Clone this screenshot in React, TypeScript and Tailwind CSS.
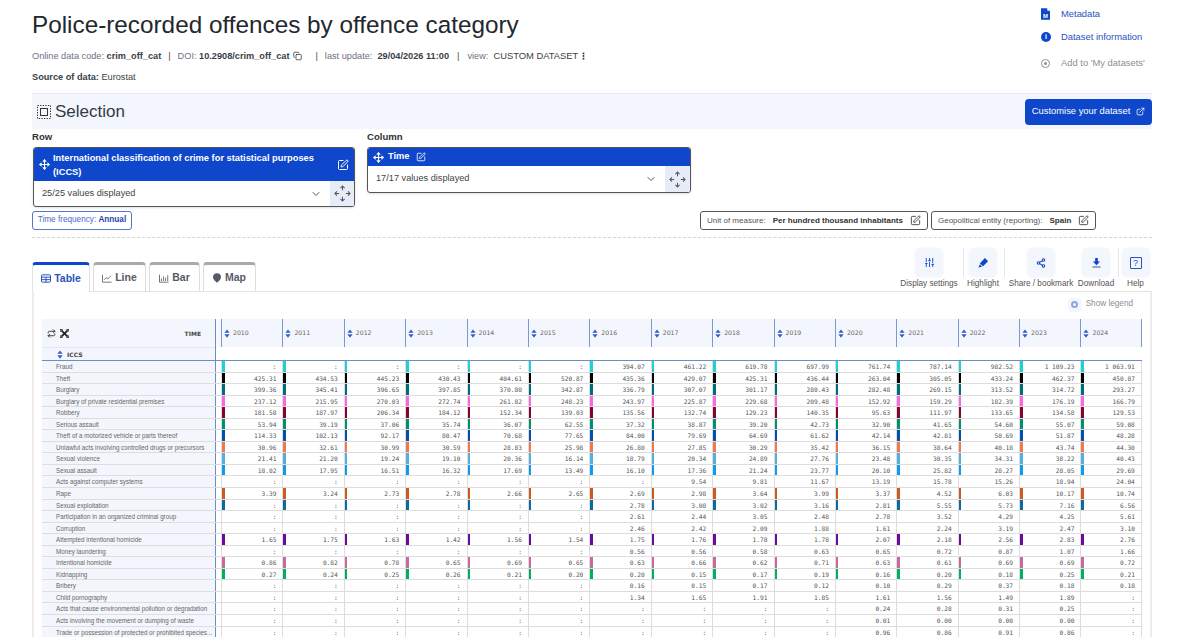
import { ChevronDown, Copy, EllipsisVertical, ExternalLink, Move, Repeat, Share2, SlidersVertical, SquarePen } from "lucide-react";

const years = ["2010", "2011", "2012", "2013", "2014", "2015", "2016", "2017", "2018", "2019", "2020", "2021", "2022", "2023", "2024"];

const rows = [
  { label: "Fraud", color: "bg-[#1fd0d6]", values: ":,:,:,:,:,:,394.07,461.22,619.78,697.99,761.74,787.14,982.52,1 109.23,1 063.91" },
  { label: "Theft", color: "bg-[#000000]", values: "425.31,434.53,445.23,430.43,404.61,520.87,435.36,429.07,425.31,436.44,263.04,305.05,433.24,462.37,450.87" },
  { label: "Burglary", color: "bg-[#006d77]", values: "399.36,345.41,396.65,397.85,370.80,342.87,336.79,307.07,301.17,280.43,282.48,269.15,313.52,314.72,293.27" },
  { label: "Burglary of private residential premises", color: "bg-[#f668e8]", values: "237.12,215.95,270.03,272.74,261.82,248.23,243.97,225.87,229.68,209.48,152.92,159.29,182.39,176.19,166.79" },
  { label: "Robbery", color: "bg-[#8a0030]", values: "181.58,187.97,206.34,184.12,152.34,139.03,135.56,132.74,129.23,140.35,95.63,111.97,133.65,134.58,129.53" },
  { label: "Serious assault", color: "bg-[#00906a]", values: "53.94,39.19,37.06,35.74,36.07,62.55,37.32,38.87,39.20,42.73,32.90,41.65,54.60,55.07,59.08" },
  { label: "Theft of a motorized vehicle or parts thereof", color: "bg-[#0050b0]", values: "114.33,102.13,92.17,80.47,70.68,77.65,84.00,79.69,64.69,61.62,42.14,42.81,50.69,51.87,48.28" },
  { label: "Unlawful acts involving controlled drugs or precursors", color: "bg-[#f07850]", values: "30.96,32.61,30.99,30.59,28.83,25.98,26.80,27.85,30.29,35.42,36.15,38.64,40.18,43.74,44.30" },
  { label: "Sexual violence", color: "bg-[#56aee0]", values: "21.41,21.20,19.24,19.10,20.36,16.14,18.79,20.34,24.89,27.76,23.48,30.35,34.31,38.22,40.43" },
  { label: "Sexual assault", color: "bg-[#0a9cf0]", values: "18.02,17.95,16.51,16.32,17.69,13.49,16.10,17.36,21.24,23.77,20.10,25.82,28.27,28.05,29.69" },
  { label: "Acts against computer systems", color: "", values: ":,:,:,:,:,:,:,9.54,9.81,11.67,13.19,15.78,15.26,18.94,24.04" },
  { label: "Rape", color: "bg-[#d05a1e]", values: "3.39,3.24,2.73,2.78,2.66,2.65,2.69,2.98,3.64,3.99,3.37,4.52,6.03,10.17,10.74" },
  { label: "Sexual exploitation", color: "bg-[#0d6aa0]", values: ":,:,:,:,:,:,2.78,3.08,3.02,3.16,2.81,5.55,5.73,7.16,6.56" },
  { label: "Participation in an organized criminal group", color: "", values: ":,:,:,:,:,:,2.61,2.44,3.05,2.48,2.78,3.52,4.29,4.25,5.61" },
  { label: "Corruption", color: "", values: ":,:,:,:,:,:,2.46,2.42,2.09,1.88,1.61,2.24,3.19,2.47,3.10" },
  { label: "Attempted intentional homicide", color: "bg-[#6a0a9a]", values: "1.65,1.75,1.63,1.42,1.56,1.54,1.75,1.76,1.78,1.78,2.07,2.18,2.56,2.83,2.76" },
  { label: "Money laundering", color: "", values: ":,:,:,:,:,:,0.56,0.56,0.58,0.63,0.65,0.72,0.87,1.07,1.66" },
  { label: "Intentional homicide", color: "bg-[#c76a9a]", values: "0.86,0.82,0.78,0.65,0.69,0.65,0.63,0.66,0.62,0.71,0.63,0.61,0.69,0.69,0.72" },
  { label: "Kidnapping", color: "bg-[#00b060]", values: "0.27,0.24,0.25,0.26,0.21,0.20,0.20,0.15,0.17,0.19,0.16,0.20,0.18,0.25,0.21" },
  { label: "Bribery", color: "", values: ":,:,:,:,:,:,0.16,0.15,0.17,0.12,0.10,0.29,0.37,0.18,0.18" },
  { label: "Child pornography", color: "", values: ":,:,:,:,:,:,1.34,1.65,1.91,1.85,1.61,1.56,1.49,1.89,:" },
  { label: "Acts that cause environmental pollution or degradation", color: "", values: ":,:,:,:,:,:,:,:,:,:,0.24,0.28,0.31,0.25,:" },
  { label: "Acts involving the movement or dumping of waste", color: "", values: ":,:,:,:,:,:,:,:,:,:,0.01,0.00,0.00,0.00,:" },
  { label: "Trade or possession of protected or prohibited species...", color: "", values: ":,:,:,:,:,:,:,:,:,:,0.96,0.86,0.91,0.86,:" },
];

const SortIcon = ({ className }: { className?: string }) => (
  <svg viewBox="0 0 8 12" className={className} fill="#2f5fc4">
    <path d="M4 0.5 L7.5 5 H0.5 Z" />
    <path d="M4 11.5 L7.5 7 H0.5 Z" />
  </svg>
);

// four separate arrows, the centre stays empty
const ExpandArrows = () => (
  <svg viewBox="0 0 18 18" className="w-[17px] h-[17px]" fill="none" stroke="#555" strokeWidth="1.1">
    <path d="M9 1 V5.5 M6.8 3.2 L9 1 L11.2 3.2" />
    <path d="M9 17 V12.5 M6.8 14.8 L9 17 L11.2 14.8" />
    <path d="M1 9 H5.5 M3.2 6.8 L1 9 L3.2 11.2" />
    <path d="M17 9 H12.5 M14.8 6.8 L17 9 L14.8 11.2" />
  </svg>
);

const ToolButton = ({ label, width, children }: { label: string; width: string; children: React.ReactNode }) => (
  <div className={`flex flex-col items-center ${width}`}>
    <div className="w-[28px] h-[29px] rounded-md bg-[#f3f6fc] shadow-[0_0_2px_rgba(0,0,0,0.08)] flex items-center justify-center text-[#0e47cb]">
      {children}
    </div>
    <span className="text-[8.2px] leading-[14px] text-[#555] whitespace-nowrap">{label}</span>
  </div>
);

const Tab = ({ label, active, width, children }: { label: string; active?: boolean; width: string; children: React.ReactNode }) => (
  <div className={`${width} border-t-[3px] border-x rounded-t-sm flex items-center justify-center gap-[3px] text-[10.5px] font-bold ${active ? "h-[30px] -mb-px border-t-[#0e47cb] border-x-[#e3e3e3] text-[#2a52be] bg-white" : "h-[29px] border-t-[#aaaaaa] border-x-[#dddddd] text-[#555b66]"}`}>
    {children}
    {label}
  </div>
);

const App = () => {
  return (
    <div className="h-[637px] w-[1200px] overflow-hidden bg-white font-['Liberation_Sans',sans-serif] pl-[32px] pr-[48px]">
      <div className="flex justify-between h-[93px]">
        <div>
          <h1 className="text-[24.3px] leading-[32px] mt-[9px] text-[#23272e]">Police-recorded offences by offence category</h1>
          <div className="mt-[8px] text-[9.2px] leading-[14px] text-[#6b7280] flex items-center">
            <span>Online data code:&nbsp;</span>
            <b className="text-[#3a3f47]">crim_off_cat</b>
            <span className="mx-[7px] text-[#444]">|</span>
            <span>DOI:&nbsp;</span>
            <b className="text-[#3a3f47]">10.2908/crim_off_cat</b>
            <Copy className="w-[9px] h-[10px] ml-[4px] text-[#333]" strokeWidth={2} />
            <span className="ml-[13px] mr-[7px] text-[#444]">|</span>
            <span>last update:&nbsp;&nbsp;</span>
            <b className="text-[#3a3f47]">29/04/2026 11:00</b>
            <span className="mx-[8px] text-[#444]">|</span>
            <span>view:&nbsp;&nbsp;</span>
            <span className="text-[#3a3f47] text-[9.4px]">CUSTOM DATASET</span>
            <EllipsisVertical className="w-[9px] h-[10px] ml-[1px] text-[#222]" strokeWidth={3} />
          </div>
          <div className="mt-[7px] text-[9.2px] leading-[14px] text-[#3a3f47]"><b>Source of data:</b> Eurostat</div>
        </div>
        <div className="w-[111px] text-[9.4px] pt-[7px] flex flex-col gap-[9px] leading-[14px]">
          <div className="flex items-center text-[#2a52be]">
            <svg viewBox="0 0 10 13" className="w-[9px] h-[12px] mr-[11px]">
              <path d="M0 0 H6.5 L10 3.5 V13 H0 Z" fill="#0e47cb" />
              <path d="M7 0 L10 3 H7 Z" fill="#ffffff" />
              <text x="5" y="11" fontSize="6.5" fontWeight="700" textAnchor="middle" fill="#ffffff">M</text>
            </svg>
            Metadata
          </div>
          <div className="flex items-center text-[#2a52be]">
            <span className="w-[10px] h-[10px] rounded-full bg-[#0e47cb] text-white text-[7px] leading-[10px] font-bold text-center mr-[10px]">i</span>
            Dataset information
          </div>
          <div className="flex items-center text-[#8a8f98] mt-[3px]">
            <span className="w-[9px] h-[9px] rounded-full border border-[#8a8f98] flex items-center justify-center mr-[11px]">
              <span className="w-[3px] h-[3px] rounded-full bg-[#8a8f98]" />
            </span>
            Add to 'My datasets'
          </div>
        </div>
      </div>

      <div className="h-[36px] bg-[#f3f6fc] border-t border-[#e3e8f2] flex items-center justify-between pl-[5px]">
        <div className="flex items-center gap-[4px] text-[17px] text-[#333a45]">
          <svg viewBox="0 0 14 14" className="w-[14px] h-[14px]" fill="none" stroke="#333">
            <rect x="0.5" y="0.5" width="13" height="13" strokeDasharray="1.3 1.3" />
            <rect x="3.5" y="3.5" width="7" height="7" />
          </svg>
          Selection
        </div>
        <div className="h-[26px] w-[127px] bg-[#0e47cb] rounded-sm text-white text-[9.4px] flex items-center justify-center gap-[6px]">
          Customise your dataset
          <ExternalLink className="w-[9px] h-[9px]" />
        </div>
      </div>

      <div className="flex gap-[12px] mt-[1px]">
        <div className="w-[323px] pl-[1px]">
          <div className="text-[9.6px] font-bold leading-[14px] text-[#333] -ml-[1px] mb-[3px]">Row</div>
          <div className="border border-[#555] rounded-[3px] overflow-hidden shadow-sm">
            <div className="h-[33px] bg-[#0e47cb] text-white flex items-center pl-[5px] pr-[5px]">
              <Move className="w-[11px] h-[11px] mr-[3px] shrink-0" strokeWidth={2.5} />
              <div className="text-[9.3px] leading-[14px] font-bold flex-1">International classification of crime for statistical purposes (ICCS)</div>
              <SquarePen className="w-[12px] h-[12px] shrink-0" />
            </div>
            <div className="h-[25px] flex items-center justify-between pl-[8px] text-[9.2px] text-[#444]">
              <span>25/25 values displayed</span>
              <div className="flex items-center h-full">
                <ChevronDown className="w-[12px] h-[12px] mr-[8px] text-[#555]" />
                <div className="w-[24px] h-full bg-[#e6edf9] flex items-center justify-center">
                  <ExpandArrows />
                </div>
              </div>
            </div>
          </div>
        </div>
        <div className="w-[324px]">
          <div className="text-[9.6px] font-bold leading-[14px] text-[#333] mb-[3px]">Column</div>
          <div className="border border-[#555] rounded-[3px] overflow-hidden shadow-sm">
            <div className="h-[18px] bg-[#0e47cb] text-white flex items-center pl-[5px] gap-[4px]">
              <Move className="w-[11px] h-[11px]" strokeWidth={2.5} />
              <span className="text-[9.3px] font-bold mr-[2px]">Time</span>
              <SquarePen className="w-[10px] h-[10px]" />
            </div>
            <div className="h-[26px] flex items-center justify-between pl-[8px] text-[9.2px] text-[#444]">
              <span>17/17 values displayed</span>
              <div className="flex items-center h-full">
                <ChevronDown className="w-[12px] h-[12px] mr-[8px] text-[#555]" />
                <div className="w-[25px] h-full bg-[#e6edf9] flex items-center justify-center">
                  <ExpandArrows />
                </div>
              </div>
            </div>
          </div>
        </div>
      </div>

      <div className="flex mt-[4px] h-[20px] text-[8px]">
        <div className="h-[19px] w-[100px] border border-[#5577cc] rounded-[3px] flex items-center justify-center text-[#4a6cc8] text-[8.2px]">
          Time frequency:&nbsp;<b className="text-[#1d43a8]">Annual</b>
        </div>
        <div className="ml-[568px] h-[19px] w-[228px] border border-[#555] rounded-[3px] flex items-center pl-[6px] text-[#555]">
          Unit of measure:
          <b className="ml-[7px] text-[#333]">Per hundred thousand inhabitants</b>
          <SquarePen className="w-[11px] h-[11px] ml-[7px] text-[#444]" />
        </div>
        <div className="ml-[3px] h-[19px] w-[165px] border border-[#555] rounded-[3px] flex items-center pl-[6px] text-[#555]">
          Geopolitical entity (reporting):
          <b className="ml-[7px] text-[#333]">Spain</b>
          <SquarePen className="w-[11px] h-[11px] ml-[7px] text-[#444]" />
        </div>
      </div>

      <div className="mt-[6px] border-t border-dashed border-[#d5d5d5]" />

      <div className="flex justify-between items-end h-[43px] mt-[10px]">
        <div className="flex gap-[3px]">
          <Tab label="Table" active width="w-[58px]">
            <svg viewBox="0 0 12 10" className="w-[10px] h-[9px]" fill="none" stroke="#2a52be" strokeWidth="1.2">
              <rect x="0.6" y="0.6" width="10.8" height="8.8" rx="1" />
              <path d="M0.6 3.4 H11.4 M0.6 6.4 H11.4 M6 3.4 V9.4" />
            </svg>
          </Tab>
          <Tab label="Line" width="w-[53px]">
            <svg viewBox="0 0 12 10" className="w-[10px] h-[9px]" fill="none" stroke="#555b66" strokeWidth="1">
              <path d="M0.6 0.5 V9.4 H11.5" />
              <path d="M2.5 6.5 L5 4 L7 5.5 L10.5 2" />
            </svg>
          </Tab>
          <Tab label="Bar" width="w-[51px]">
            <svg viewBox="0 0 12 10" className="w-[10px] h-[9px]" fill="none" stroke="#555b66" strokeWidth="1">
              <path d="M0.6 0.5 V9.4 H11.5 M3 8 V5 M5.5 8 V2.5 M8 8 V4 M10.5 8 V1" />
            </svg>
          </Tab>
          <Tab label="Map" width="w-[53px]">
            <svg viewBox="0 0 10 12" className="w-[8px] h-[10px] mr-[1px]" fill="#555b66">
              <path d="M5 0 C8 0 10 2 10 5 C10 8 6.5 10.5 5 12 C3.5 10.5 0 8 0 5 C0 2 2 0 5 0 Z" />
            </svg>
          </Tab>
        </div>
        <div className="flex self-start">
          <ToolButton label="Display settings" width="w-[62px]">
            <SlidersVertical className="w-[11px] h-[11px]" />
          </ToolButton>
          <div className="w-px h-[29px] bg-[#e5e7eb] ml-[3px]" />
          <ToolButton label="Highlight" width="w-[38px]">
            <svg viewBox="0 0 12 12" className="w-[11px] h-[11px]" fill="#0e47cb">
              <path d="M7.5 1 L11 4.5 L5.5 10 L2 7 Z" />
              <path d="M2 8 L4.5 10.5 L0.5 11.5 Z" />
            </svg>
          </ToolButton>
          <div className="w-px h-[29px] bg-[#e5e7eb] ml-[2px]" />
          <ToolButton label="Share / bookmark" width="w-[72px]">
            <Share2 className="w-[10px] h-[10px]" strokeWidth={2.5} />
          </ToolButton>
          <ToolButton label="Download" width="w-[38px]">
            <svg viewBox="0 0 10 12" className="w-[9px] h-[11px]" fill="#0e47cb">
              <path d="M3.5 1 H6.5 V5 H9 L5 9 L1 5 H3.5 Z" />
              <rect x="0.5" y="10.5" width="9" height="1" />
            </svg>
          </ToolButton>
          <div className="w-px h-[29px] bg-[#e5e7eb] ml-[3px]" />
          <ToolButton label="Help" width="w-[33px]">
            <span className="w-[12px] h-[12px] border border-[#2a52be] rounded-[1px] text-[9px] leading-[10px] text-center text-[#2a52be]">?</span>
          </ToolButton>
        </div>
      </div>

      <div className="border-t border-x-2 border-[#ececec] border-t-[#e3e3e3]">
        <div className="h-[27px] flex items-center justify-end pr-[17px] pb-[2px] text-[8.2px] text-[#8a8f98]">
          <div className="w-[14px] h-[14px] rounded bg-[#f3f6fc] flex items-center justify-center mr-[4px]">
            <span className="w-[7px] h-[7px] rounded-full border-2 border-[#8ea6dc]" />
          </div>
          Show legend
        </div>
        <div className="ml-[8px] w-[1100px]">
          <div className="flex h-[28px]">
            <div className="w-[173px] bg-[#f3f6fc] flex items-center pl-[5px] pr-[14px] text-[#333]">
              <Repeat className="w-[9px] h-[9px]" strokeWidth={2.5} />
              <svg viewBox="0 0 10 10" className="w-[9px] h-[9px] ml-[4px]" fill="none" stroke="#222" strokeWidth="2">
                <path d="M1.5 1.5 L8.5 8.5 M8.5 1.5 L1.5 8.5" />
                <path d="M0 3 V0 H3 M7 0 H10 V3 M10 7 V10 H7 M3 10 H0 V7" strokeWidth="1.4" />
              </svg>
              <span className="ml-auto font-['DejaVu_Sans',sans-serif] text-[6px] font-bold text-[#444]">TIME</span>
            </div>
            <div className="w-[6px] border-l border-[#6b8cc4] bg-[#f8f9fd]" />
            {years.map((y) => (
              <div key={y} className="w-[61.4px] border-l border-[#7b97cc] bg-[#f3f6fc] flex items-center pl-[2px] gap-[3px] last:border-r">
                <SortIcon className="w-[6px] h-[9px]" />
                <span className="font-['DejaVu_Sans',sans-serif] text-[6.2px] text-[#666]">{y}</span>
              </div>
            ))}
          </div>
          <div className="flex h-[14px] border-b border-[#6b8cc4]">
            <div className="w-[173px] bg-[#f3f6fc] border-t border-[#e3e8f2] flex items-center pl-[15px] gap-[4px]">
              <SortIcon className="w-[6px] h-[9px]" />
              <span className="font-['DejaVu_Sans',sans-serif] text-[6px] font-bold text-[#444]">ICCS</span>
            </div>
            <div className="flex-1 border-l border-[#6b8cc4]" />
          </div>
          {rows.map((row) => (
            <div key={row.label} className="flex h-[11.55px] border-b border-[#dddddd]">
              <div className="w-[173px] bg-[#f3f6fc] pl-[14px] text-[6.27px] leading-[11px] text-[#666] whitespace-nowrap overflow-hidden">{row.label}</div>
              <div className="w-[6px] border-l border-[#6b8cc4]" />
              {row.values.split(",").map((value, i) => (
                <div key={i} className="relative w-[61.4px] border-l border-[#dddddd] pr-[6px] text-right font-['DejaVu_Sans_Mono',monospace] text-[6.2px] leading-[11px] text-[#555] last:border-r">
                  {row.color && <span className={`absolute left-0 top-0 bottom-0 w-[2.5px] ${row.color}`} />}
                  {value}
                </div>
              ))}
            </div>
          ))}
        </div>
      </div>
    </div>
  );
};

export default App;
